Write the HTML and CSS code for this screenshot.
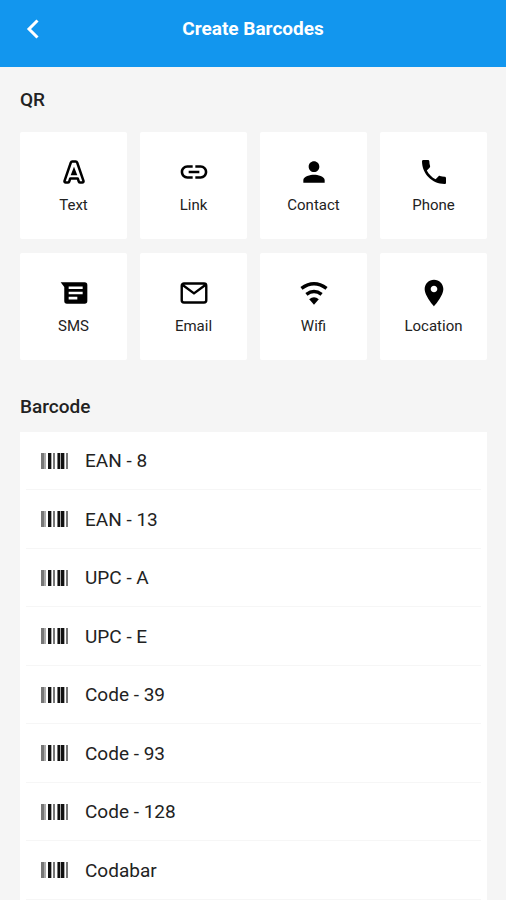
FILE: index.html
```html
<!DOCTYPE html>
<html lang="en">
<head>
<meta charset="utf-8">
<meta name="viewport" content="width=device-width, initial-scale=1">
<title>Create Barcodes</title>
<link rel="stylesheet" href="styles.css">
</head>
<body>
<svg class="defs" aria-hidden="true">
  <symbol id="barcode" viewBox="0 0 27 16">
    <path fill="#777" d="M0 0h3v16H0zM12 0h2v16h-2zM16 0h2v16h-2zM25 0h2v16h-2z"/>
    <path fill="#aaa" d="M3 0h2v16H3zM10 0h1v16h-1zM19 0h1v16h-1zM23 0h1v16h-1z"/>
    <path fill="#111" d="M7 0h3v16H7zM17 0h2v16h-2zM20 0h3v16h-3z"/>
  </symbol>
</svg>
<header class="topbar">
  <button class="back" type="button" aria-label="Back">
    <svg viewBox="0 0 14 20"><path d="M12.500 1.500 4 10l8.500 8.500" fill="none" stroke="currentColor" stroke-width="3"/></svg>
  </button>
  <h1 class="title">Create Barcodes</h1>
</header>
<main class="content">
  <h2 class="heading">QR</h2>
  <div class="tiles">
    <button class="tile" type="button">
      <svg class="icon" viewBox="0 0 24 24"><path fill="none" stroke="currentColor" stroke-width="1.900" stroke-linejoin="round" d="M10.700 4.200h2.600c.5 0 .9.300 1.100.8l4.700 13.600c.2.700-.2 1.300-.9 1.300h-1.600c-.5 0-.8-.300-1-.7l-.8-2.400H9.200l-.8 2.400c-.2.400-.5.700-1 .7H5.800c-.7 0-1.100-.6-.9-1.300L9.600 5c.2-.5.600-.8 1.100-.8z"/><path fill="currentColor" d="M12 8 9.500 14.500h5z"/></svg>
      <span>Text</span>
    </button>
    <button class="tile" type="button">
      <svg class="icon" viewBox="0 0 24 24"><path fill="currentColor" d="M3.900 12c0-1.710 1.390-3.100 3.100-3.100h4V7H7c-2.760 0-5 2.240-5 5s2.240 5 5 5h4v-1.900H7c-1.710 0-3.100-1.390-3.100-3.100zM8 13h8v-2H8v2zm9-6h-4v1.900h4c1.710 0 3.100 1.390 3.100 3.100s-1.390 3.100-3.100 3.100h-4V17h4c2.760 0 5-2.240 5-5s-2.240-5-5-5z"/></svg>
      <span>Link</span>
    </button>
    <button class="tile" type="button">
      <svg class="icon" viewBox="0 0 24 24"><path fill="currentColor" d="M12 12c2.210 0 4-1.790 4-4s-1.790-4-4-4-4 1.790-4 4 1.790 4 4 4zm0 2c-2.670 0-8 1.340-8 4v2h16v-2c0-2.660-5.330-4-8-4z"/></svg>
      <span>Contact</span>
    </button>
    <button class="tile" type="button">
      <svg class="icon" viewBox="0 0 24 24"><path fill="currentColor" d="M6.620 10.790c1.440 2.830 3.760 5.140 6.590 6.590l2.200-2.200c.27-.27.67-.36 1.020-.24 1.120.37 2.330.57 3.570.57.55 0 1 .45 1 1V20c0 .55-.45 1-1 1C10.610 21 3 13.390 3 4c0-.55.45-1 1-1h3.500c.55 0 1 .45 1 1 0 1.250.2 2.450.57 3.570.11.35.03.74-.25 1.020l-2.200 2.200z"/></svg>
      <span>Phone</span>
    </button>
    <button class="tile" type="button">
      <svg class="icon" viewBox="0 0 24 24"><path fill="currentColor" fill-rule="evenodd" d="M2 4h18a2 2 0 0 1 2 2v12a2 2 0 0 1-2 2H6.700a2 2 0 0 1-2-2V7.500zM8 7.100v1.900h10.500V7.100zM8 11v1.900h10.500V11zM8 14.900v1.900h6.500v-1.900z"/></svg>
      <span>SMS</span>
    </button>
    <button class="tile" type="button">
      <svg class="icon" viewBox="0 0 24 24"><path fill="none" stroke="currentColor" stroke-width="1.800" stroke-linejoin="round" d="M4.500 4.900h15a1.700 1.700 0 0 1 1.700 1.700v10.800a1.700 1.700 0 0 1-1.700 1.700h-15a1.700 1.700 0 0 1-1.700-1.700V6.600a1.700 1.700 0 0 1 1.700-1.700zM3.500 6l8.500 6.300L20.500 6"/></svg>
      <span>Email</span>
    </button>
    <button class="tile" type="button">
      <svg class="icon" viewBox="0 0 24 24"><path fill="none" stroke="currentColor" stroke-width="2.600" d="M2.600 8.600Q12 1.600 21.400 8.600M6.300 13q5.700-4.300 11.400 0"/><path fill="currentColor" d="M8.400 16.700q3.600-2.900 7.200 0L12 20.800z"/></svg>
      <span>Wifi</span>
    </button>
    <button class="tile" type="button">
      <svg class="icon" viewBox="0 0 24 24"><path fill="currentColor" d="M12 2C8.130 2 5 5.130 5 9c0 5.250 7 13 7 13s7-7.750 7-13c0-3.870-3.130-7-7-7zm0 9.500c-1.380 0-2.500-1.120-2.500-2.500s1.120-2.500 2.500-2.500 2.500 1.120 2.500 2.500-1.120 2.500-2.500 2.500z"/></svg>
      <span>Location</span>
    </button>
  </div>
  <h2 class="heading heading-list">Barcode</h2>
  <ul class="list">
    <li><button class="row" type="button"><svg class="bars"><use href="#barcode"/></svg>EAN - 8</button></li>
    <li><button class="row" type="button"><svg class="bars"><use href="#barcode"/></svg>EAN - 13</button></li>
    <li><button class="row" type="button"><svg class="bars"><use href="#barcode"/></svg>UPC - A</button></li>
    <li><button class="row" type="button"><svg class="bars"><use href="#barcode"/></svg>UPC - E</button></li>
    <li><button class="row" type="button"><svg class="bars"><use href="#barcode"/></svg>Code - 39</button></li>
    <li><button class="row" type="button"><svg class="bars"><use href="#barcode"/></svg>Code - 93</button></li>
    <li><button class="row" type="button"><svg class="bars"><use href="#barcode"/></svg>Code - 128</button></li>
    <li><button class="row" type="button"><svg class="bars"><use href="#barcode"/></svg>Codabar</button></li>
  </ul>
</main>
</body>
</html>
```
FILE: styles.css
```css
* {
  box-sizing: border-box;
}

body {
  margin: 0;
  background: #f5f5f5;
  color: #222;
  font-family: Roboto, "Liberation Sans", sans-serif;
}

button {
  border: 0;
  margin: 0;
  color: inherit;
  font-family: inherit;
}

.defs {
  display: none;
}

.topbar {
  display: grid;
  grid-template-columns: 48px 1fr 48px;
  align-items: center;
  height: 67px;
  padding-bottom: 10px;
  background: #1296ee;
  color: #fff;
}

.back {
  display: flex;
  align-items: center;
  height: 48px;
  padding: 0 0 0 25px;
  background: none;
}

.back svg {
  width: 14px;
  height: 20px;
}

.title {
  margin: 0;
  font-size: 19px;
  font-weight: 700;
  line-height: 24px;
  text-align: center;
}

.content {
  padding: 21px 19px 0 20px;
}

.heading {
  margin: 0 0 20px;
  font-size: 19px;
  font-weight: 500;
  line-height: 24px;
}

.heading-list {
  margin: 35px 0 13px;
}

.tiles {
  display: grid;
  grid-template-columns: repeat(4, 1fr);
  gap: 14px 13px;
}

.tile {
  display: flex;
  flex-direction: column;
  align-items: center;
  gap: 7px;
  height: 107px;
  padding: 24px 0 0;
  border-radius: 2px;
  background: #fff;
  font-size: 15px;
  line-height: 20px;
}

.icon {
  width: 32px;
  height: 32px;
  color: #000;
}

.list {
  margin: 0;
  padding: 0;
  list-style: none;
  background: #fff;
}

.list li {
  height: 59px;
  margin: 0 6px;
  border-bottom: 1px solid #f6f6f6;
}

.list li:nth-child(odd) {
  height: 58px;
}

.row {
  display: flex;
  align-items: center;
  gap: 17px;
  width: 100%;
  height: 100%;
  padding: 0 15px;
  background: none;
  font-size: 19px;
  text-align: left;
}

.bars {
  width: 27px;
  height: 16px;
}
```
